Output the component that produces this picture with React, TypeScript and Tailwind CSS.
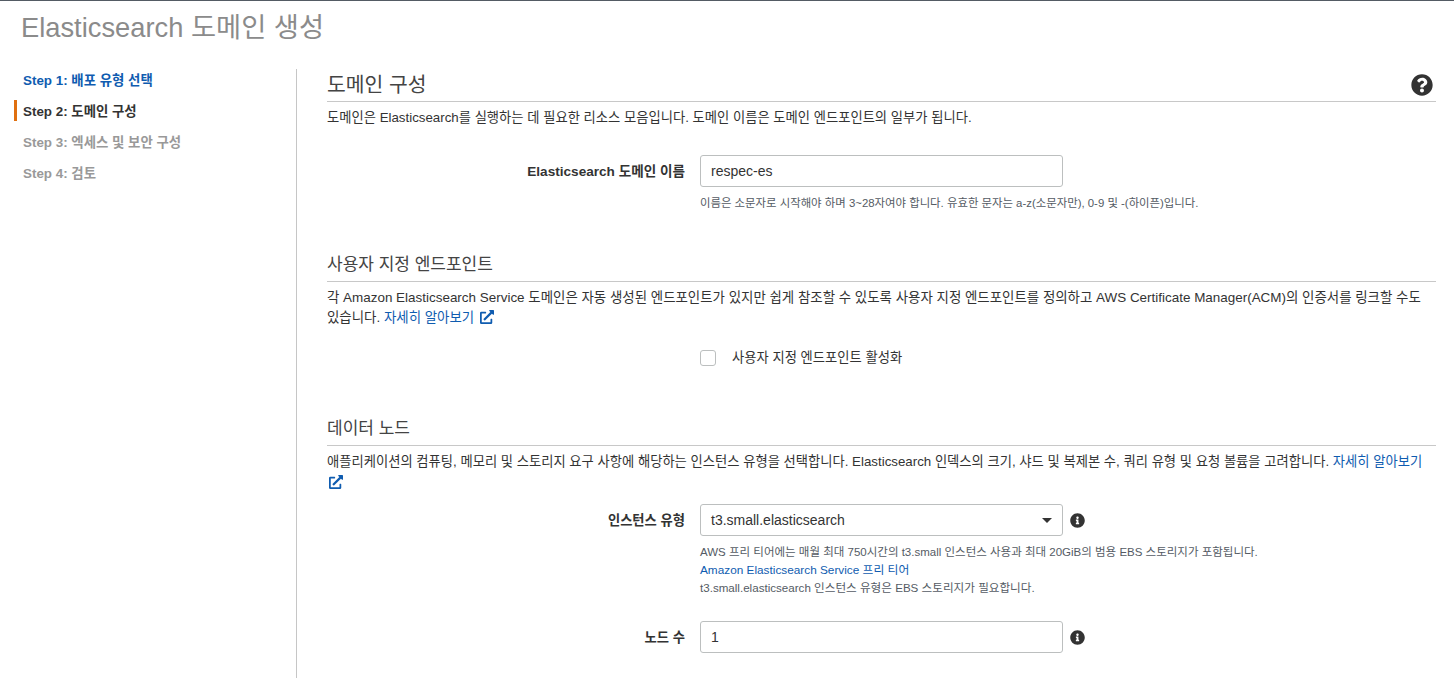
import { FaExternalLinkAlt, FaInfoCircle, FaQuestionCircle } from "react-icons/fa";

const FONT = "font-['Liberation_Sans','Noto_Sans_CJK_KR',sans-serif]";

function SectionHead({ title, size = "text-[17px]", help }: { title: string; size?: string; help?: boolean }) {
  return (
    <div className="flex items-end justify-between border-b border-[#c8c8c8] h-[33px] pb-[3px]">
      <h2 className={`${size} leading-[26px] text-[#444]`}>{title}</h2>
      {help && <FaQuestionCircle className="w-[22px] h-[22px] mb-[2px] mr-[3px] text-[#333]" />}
    </div>
  );
}

function InfoIcon() {
  return <FaInfoCircle className="w-[15px] h-[15px] ml-[7px] shrink-0 text-[#333]" />;
}

function LearnMore() {
  return (
    <a className="text-[#0f5cb0]">
      자세히 알아보기 <FaExternalLinkAlt className="inline w-[14px] h-[14px] ml-[2px] align-[-2px]" />
    </a>
  );
}

function FieldRow({ label, size = "text-[13.3px]", children }: { label: string; size?: string; children: React.ReactNode }) {
  return (
    <div className="flex items-start -ml-[30px]">
      <label className={`w-[403px] text-right pr-[15px] ${size} font-bold leading-[33px] text-[#333]`}>{label}</label>
      {children}
    </div>
  );
}

const inputCls = "w-[363px] h-[32px] rounded-[3px] border border-[#bcbfbf] bg-white px-[10px] text-[14px] leading-[30px] text-[#333]";

export default function App() {
  return (
    <div className={`${FONT} h-[678px] overflow-hidden bg-white border-t border-[#545b64] text-[13.3px] text-[#333]`}>
      <h1 className="pl-[21px] pt-[9px] text-[27.3px] leading-[36px] text-[#8b8b8b]">Elasticsearch 도메인 생성</h1>
      <div className="flex mt-[23px]">
        <nav className="w-[297px] h-[610px] shrink-0 border-r border-[#c6c6c6] text-[13.4px] font-bold">
          <div className="h-[31px] pl-[23px] leading-[24px] text-[#0f5cb0]">Step 1: 배포 유형 선택</div>
          <div className="h-[31px] pl-[23px] leading-[24px] text-[#333] relative">
            <span className="absolute left-[14px] top-0 w-[3px] h-[21px] bg-[#e07010]" />
            Step 2: 도메인 구성
          </div>
          <div className="h-[31px] pl-[23px] leading-[24px] text-[#999]">Step 3: 엑세스 및 보안 구성</div>
          <div className="h-[31px] pl-[23px] leading-[24px] text-[#999]">Step 4: 검토</div>
        </nav>
        <main className="flex-1 pl-[30px] pr-[18px]">
          <SectionHead title="도메인 구성" size="text-[20.4px]" help />
          <p className="mt-[7px] leading-[18px]">도메인은 Elasticsearch를 실행하는 데 필요한 리소스 모음입니다. 도메인 이름은 도메인 엔드포인트의 일부가 됩니다.</p>
          <div className="mt-[28px]">
            <FieldRow label="Elasticsearch 도메인 이름" size="text-[13.6px]">
              <div>
                <div className={inputCls}>respec-es</div>
                <p className="mt-[8px] text-[11.4px] leading-[16px] text-[#545b64]">이름은 소문자로 시작해야 하며 3~28자여야 합니다. 유효한 문자는 a-z(소문자만), 0-9 및 -(하이픈)입니다.</p>
              </div>
            </FieldRow>
          </div>
          <div className="mt-[38px]">
            <SectionHead title="사용자 지정 엔드포인트" />
          </div>
          <p className="mt-[6px] leading-[20px] text-[13.45px] break-keep">각 Amazon Elasticsearch Service 도메인은 자동 생성된 엔드포인트가 있지만 쉽게 참조할 수 있도록 사용자 지정 엔드포인트를 정의하고 AWS Certificate Manager(ACM)의 인증서를 링크할 수도 있습니다. <LearnMore /></p>
          <div className="mt-[21px] -ml-[30px] pl-[403px] flex items-center h-[18px]">
            <span className="w-[16px] h-[16px] rounded-[3px] border border-[#bcbfbf] bg-white" />
            <span className="ml-[16px]">사용자 지정 엔드포인트 활성화</span>
          </div>
          <div className="mt-[46px]">
            <SectionHead title="데이터 노드" />
          </div>
          <p className="mt-[5px] leading-[21px]">애플리케이션의 컴퓨팅, 메모리 및 스토리지 요구 사항에 해당하는 인스턴스 유형을 선택합니다. Elasticsearch 인덱스의 크기, 샤드 및 복제본 수, 쿼리 유형 및 요청 볼륨을 고려합니다. <LearnMore /></p>
          <div className="mt-[11px]">
            <FieldRow label="인스턴스 유형">
              <div>
                <div className="flex items-center">
                  <div className={`${inputCls} flex items-center justify-between`}>
                    <span>t3.small.elasticsearch</span>
                    <span className="w-0 h-0 border-x-[5px] border-x-transparent border-t-[5px] border-t-[#333]" />
                  </div>
                  <InfoIcon />
                </div>
                <div className="mt-[7px] leading-[18px] text-[#545b64]">
                  <p className="text-[11.5px]">AWS 프리 티어에는 매월 최대 750시간의 t3.small 인스턴스 사용과 최대 20GiB의 범용 EBS 스토리지가 포함됩니다.</p>
                  <p className="text-[11.8px] text-[#0f5cb0]">Amazon Elasticsearch Service 프리 티어</p>
                  <p className="text-[11.6px]">t3.small.elasticsearch 인스턴스 유형은 EBS 스토리지가 필요합니다.</p>
                </div>
              </div>
            </FieldRow>
          </div>
          <div className="mt-[24px]">
            <FieldRow label="노드 수">
              <div className="flex items-center">
                <div className={inputCls}>1</div>
                <InfoIcon />
              </div>
            </FieldRow>
          </div>
        </main>
      </div>
    </div>
  );
}
